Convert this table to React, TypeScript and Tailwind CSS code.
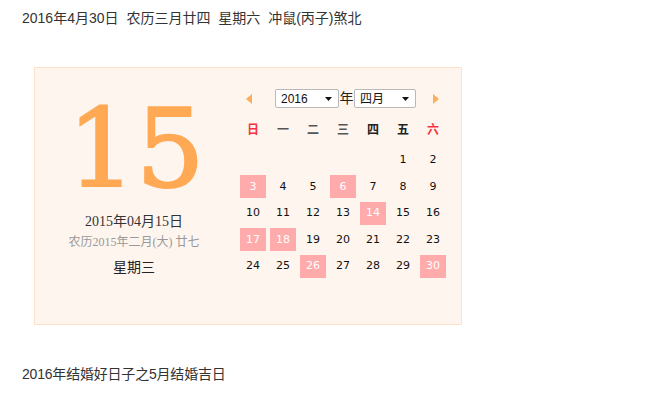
import React from "react";

const weekdays = ["日", "一", "二", "三", "四", "五", "六"];
const marked = [3, 6, 14, 17, 18, 26, 30];

// April 2016 starts on a Friday
const cells: (number | null)[] = [
  ...Array(5).fill(null),
  ...Array.from({ length: 30 }, (_, i) => i + 1),
];

function Caret() {
  return (
    <svg width="7" height="4" viewBox="0 0 7 4" className="shrink-0">
      <path d="M0 0h7L3.5 4z" fill="#111" />
    </svg>
  );
}

function FakeSelect({ value, width }: { value: string; width: string }) {
  return (
    <div
      className={`${width} h-[19px] flex items-center justify-between pl-[5px] pr-[6px] bg-white border border-[#b9b9b9] rounded-[2px] text-[12px] text-[#111]`}
    >
      <span>{value}</span>
      <Caret />
    </div>
  );
}

export default function App() {
  return (
    <div className="w-[653px] h-[408px] bg-white px-[22px] pt-[10px] text-[14px] text-[#333] font-['Liberation_Sans','Noto_Sans_CJK_SC',sans-serif]">
      <div className="h-[17px] leading-[17px] [word-spacing:4px]">2016年4月30日 农历三月廿四 星期六 冲鼠(丙子)煞北</div>

      <div className="ml-[12px] mt-[40px] w-[428px] h-[258px] border border-[#fde2c9] bg-[#fff5ef] flex">
        {/* left: big day */}
        <div className="w-[198px] flex flex-col items-center pt-[27px]">
          <div className="ml-[4px] h-[108px] text-[108px] leading-[108px] text-[#ffa955] [-webkit-text-stroke:2px_#ffa955] font-['DejaVu_Serif',serif]">
            15
          </div>
          <div className="mt-[9px] h-[20px] leading-[20px] text-[14px] text-[#333] font-['Liberation_Serif','Noto_Sans_CJK_SC',serif]">
            2015年04月15日
          </div>
          <div className="h-[21px] leading-[21px] text-[12px] text-[#999] font-['Liberation_Serif','Noto_Sans_CJK_SC',serif]">
            农历2015年二月(大) 廿七
          </div>
          <div className="mt-[4px] h-[20px] leading-[20px] text-[14px] text-[#222]">星期三</div>
        </div>

        {/* right: month grid */}
        <div className="pl-[5px] pt-[21px]">
          <div className="flex items-center h-[19px]">
            <svg width="6" height="10" viewBox="0 0 6 10" className="ml-[8px]">
              <path d="M6 0v10L0 5z" fill="#fbae5c" />
            </svg>
            <div className="ml-[23px]">
              <FakeSelect value="2016" width="w-[64px]" />
            </div>
            <span className="w-[15px] text-center text-[14px] text-[#222]">年</span>
            <FakeSelect value="四月" width="w-[62px]" />
            <svg width="6" height="10" viewBox="0 0 6 10" className="ml-[17px]">
              <path d="M0 0v10L6 5z" fill="#fbae5c" />
            </svg>
          </div>

          <div className="mt-[9px] grid grid-cols-[repeat(7,30px)] h-[26px] items-center text-center text-[12px] font-bold">
            {weekdays.map((d, i) => (
              <span
                key={d}
                className={
                  i === 0 || i === 6 ? "text-[#f5333f]" : i < 4 ? "text-[#555]" : "text-[#222]"
                }
              >
                {d}
              </span>
            ))}
          </div>

          <div className="mt-[4px] grid grid-cols-[repeat(7,30px)] auto-rows-[26.5px] text-[11px] text-[#111] font-['DejaVu_Sans',sans-serif]">
            {cells.map((n, i) => (
              <div key={i} className="flex items-center justify-center">
                {n !== null && (
                  <div
                    className={`w-[26px] h-[23px] flex items-center justify-center ${
                      marked.includes(n) ? "bg-[#ffabab] text-white" : ""
                    }`}
                  >
                    {n}
                  </div>
                )}
              </div>
            ))}
          </div>
        </div>
      </div>

      <div className="mt-[41px] h-[17px] leading-[17px] tracking-[-0.2px]">2016年结婚好日子之5月结婚吉日</div>
    </div>
  );
}
